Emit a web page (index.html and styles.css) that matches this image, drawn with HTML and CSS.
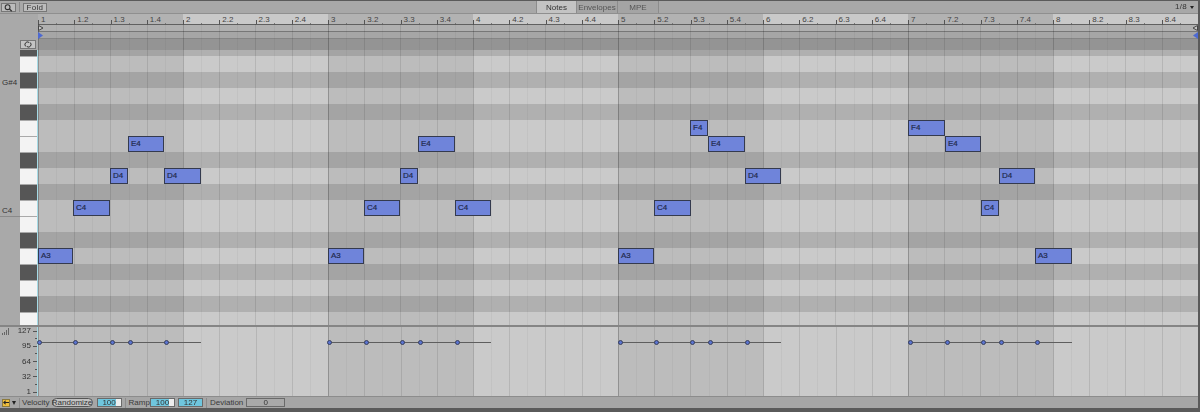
FILE: index.html
```html
<!DOCTYPE html>
<html lang="en">
<head>
<meta charset="utf-8">
<title>MIDI Note Editor</title>
<link rel="stylesheet" href="styles.css">
</head>
<body>
<div class="app">
  <header class="toolbar">
    <button class="tool-btn search" aria-label="Zoom">
      <svg width="9" height="8" viewBox="0 0 9 8"><circle cx="3.6" cy="3.2" r="2.4" fill="none" stroke="#333" stroke-width="1.1"/><path d="M5.4 5l2.4 2.2" stroke="#333" stroke-width="1.3"/></svg>
    </button>
    <span class="tool-div"></span>
    <button class="tool-btn fold">Fold</button>
    <nav class="tabs">
      <span class="tab active">Notes</span>
      <span class="tab">Envelopes</span>
      <span class="tab">MPE</span>
    </nav>
    <span class="grid-size">1/8 <i class="caret"></i></span>
  </header>

  <div class="ruler-row">
    <div class="gutter"></div>
    <div class="ruler">
      <div class="rbar odd"><span>1</span><span>1.2</span><span>1.3</span><span>1.4</span></div>
      <div class="rbar"><span>2</span><span>2.2</span><span>2.3</span><span>2.4</span></div>
      <div class="rbar odd"><span>3</span><span>3.2</span><span>3.3</span><span>3.4</span></div>
      <div class="rbar"><span>4</span><span>4.2</span><span>4.3</span><span>4.4</span></div>
      <div class="rbar odd"><span>5</span><span>5.2</span><span>5.3</span><span>5.4</span></div>
      <div class="rbar"><span>6</span><span>6.2</span><span>6.3</span><span>6.4</span></div>
      <div class="rbar odd"><span>7</span><span>7.2</span><span>7.3</span><span>7.4</span></div>
      <div class="rbar"><span>8</span><span>8.2</span><span>8.3</span><span>8.4</span></div>
    </div>
  </div>

  <div class="head-row">
    <div class="gutter head-gutter">
      <button class="loop-btn" aria-label="Loop">
        <svg width="8" height="7" viewBox="0 0 8 7"><path d="M2 5.6A2.6 2.6 0 0 1 1.4 2 2.6 2.6 0 0 1 5 1.4M6 1.4A2.6 2.6 0 0 1 6.6 5 2.6 2.6 0 0 1 3 5.6" fill="none" stroke="#333" stroke-width="1"/></svg>
      </button>
    </div>
    <div class="head-track">
      <div class="strip strip-a"></div>
      <div class="strip strip-b"></div>
      <div class="strip strip-c"></div>
      <div class="bars">
        <div class="bar odd plain"></div><div class="bar plain"></div><div class="bar odd plain"></div><div class="bar plain"></div>
        <div class="bar odd plain"></div><div class="bar plain"></div><div class="bar odd plain"></div><div class="bar plain"></div>
      </div>
      <svg class="marker m-start-top" width="6" height="6" viewBox="0 0 6 6"><path d="M.5.5L5 3 .5 5.5z" fill="#c9c9c9" stroke="#444"/></svg>
      <svg class="marker m-start-low" width="5" height="7" viewBox="0 0 5 7"><path d="M0 0L5 3.5 0 7z" fill="#4d69d2"/></svg>
      <svg class="marker m-end-top" width="6" height="6" viewBox="0 0 6 6"><path d="M5.5.5L1 3l4.5 2.5z" fill="#c9c9c9" stroke="#444"/></svg>
      <svg class="marker m-end-low" width="5" height="7" viewBox="0 0 5 7"><path d="M5 0L0 3.5 5 7z" fill="#4d69d2"/></svg>
    </div>
  </div>

  <div class="roll">
    <div class="keyboard">
      <div class="krow first"><b class="label"></b><b class="key black"></b></div>
      <div class="krow"><b class="label"></b><b class="key white"></b></div>
      <div class="krow"><b class="label">G#4</b><b class="key black"></b></div>
      <div class="krow"><b class="label"></b><b class="key white"></b></div>
      <div class="krow"><b class="label"></b><b class="key black"></b></div>
      <div class="krow"><b class="label"></b><b class="key white"></b></div>
      <div class="krow"><b class="label"></b><b class="key white"></b></div>
      <div class="krow"><b class="label"></b><b class="key black"></b></div>
      <div class="krow"><b class="label"></b><b class="key white"></b></div>
      <div class="krow"><b class="label"></b><b class="key black"></b></div>
      <div class="krow"><b class="label c4">C4</b><b class="key white"></b></div>
      <div class="krow"><b class="label"></b><b class="key white"></b></div>
      <div class="krow"><b class="label"></b><b class="key black"></b></div>
      <div class="krow"><b class="label"></b><b class="key white"></b></div>
      <div class="krow"><b class="label"></b><b class="key black"></b></div>
      <div class="krow"><b class="label"></b><b class="key white"></b></div>
      <div class="krow"><b class="label"></b><b class="key black"></b></div>
      <div class="krow last"><b class="label"></b><b class="key white"></b></div>
    </div>
    <div class="lanes">
      <div class="lane dark first"></div>
      <div class="lane"></div>
      <div class="lane dark"></div>
      <div class="lane"></div>
      <div class="lane dark"></div>
      <div class="lane"></div>
      <div class="lane"></div>
      <div class="lane dark"></div>
      <div class="lane"></div>
      <div class="lane dark"></div>
      <div class="lane"></div>
      <div class="lane"></div>
      <div class="lane dark"></div>
      <div class="lane"></div>
      <div class="lane dark"></div>
      <div class="lane"></div>
      <div class="lane dark"></div>
      <div class="lane last"></div>
      <div class="bars">
        <div class="bar odd"></div><div class="bar"></div><div class="bar odd"></div><div class="bar"></div>
        <div class="bar odd"></div><div class="bar"></div><div class="bar odd"></div><div class="bar"></div>
      </div>

      <div class="note a3" style="left:0;width:35px">A3</div>
      <div class="note c4" style="left:35px;width:37px">C4</div>
      <div class="note d4" style="left:72px;width:18px">D4</div>
      <div class="note e4" style="left:90px;width:36px">E4</div>
      <div class="note d4" style="left:126px;width:37px">D4</div>

      <div class="note a3" style="left:290px;width:36px">A3</div>
      <div class="note c4" style="left:326px;width:36px">C4</div>
      <div class="note d4" style="left:362px;width:18px">D4</div>
      <div class="note e4" style="left:380px;width:37px">E4</div>
      <div class="note c4" style="left:417px;width:36px">C4</div>

      <div class="note a3" style="left:580px;width:36px">A3</div>
      <div class="note c4" style="left:616px;width:37px">C4</div>
      <div class="note f4" style="left:652px;width:18px">F4</div>
      <div class="note e4" style="left:670px;width:37px">E4</div>
      <div class="note d4" style="left:707px;width:36px">D4</div>

      <div class="note f4" style="left:870px;width:37px">F4</div>
      <div class="note e4" style="left:907px;width:36px">E4</div>
      <div class="note c4" style="left:943px;width:18px">C4</div>
      <div class="note d4" style="left:961px;width:36px">D4</div>
      <div class="note a3" style="left:997px;width:37px">A3</div>
    </div>
  </div>

  <div class="velocity">
    <div class="vel-axis">
      <svg class="vel-icon" width="7" height="7" viewBox="0 0 7 7"><path d="M0 5h1v2H0zM2 4h1v3H2zM4 2h1v5H4zM6 0h1v7H6z" fill="#666"/></svg>
      <div class="vel-scale">
        <span class="tick major">127</span>
        <span class="tick"></span>
        <span class="tick major">95</span>
        <span class="tick"></span>
        <span class="tick major">64</span>
        <span class="tick"></span>
        <span class="tick major">32</span>
        <span class="tick"></span>
        <span class="tick major">1</span>
      </div>
    </div>
    <div class="vel-track">
      <div class="bars">
        <div class="bar odd"></div><div class="bar"></div><div class="bar odd"></div><div class="bar"></div>
        <div class="bar odd"></div><div class="bar"></div><div class="bar odd"></div><div class="bar"></div>
      </div>
      <div class="vel-line" style="left:0;width:163px">
        <i class="dot" style="left:1px"></i><i class="dot" style="left:37px"></i><i class="dot" style="left:74px"></i><i class="dot" style="left:92px"></i><i class="dot" style="left:128px"></i>
      </div>
      <div class="vel-line" style="left:290px;width:163px">
        <i class="dot" style="left:1px"></i><i class="dot" style="left:38px"></i><i class="dot" style="left:74px"></i><i class="dot" style="left:92px"></i><i class="dot" style="left:129px"></i>
      </div>
      <div class="vel-line" style="left:580px;width:163px">
        <i class="dot" style="left:2px"></i><i class="dot" style="left:38px"></i><i class="dot" style="left:74px"></i><i class="dot" style="left:92px"></i><i class="dot" style="left:129px"></i>
      </div>
      <div class="vel-line" style="left:870px;width:164px">
        <i class="dot" style="left:2px"></i><i class="dot" style="left:39px"></i><i class="dot" style="left:75px"></i><i class="dot" style="left:93px"></i><i class="dot" style="left:129px"></i>
      </div>
    </div>
  </div>

  <footer class="footer">
    <span class="fold-btn"><svg width="7" height="5" viewBox="0 0 7 5"><path d="M0 2.5L3 0v2h4v1H3v2z" fill="#222"/></svg></span>
    <i class="down-caret"></i>
    <span class="f-div first-div"></span>
    <span class="f-label velocity-label">Velocity</span>
    <span class="pill">Randomize</span>
    <span class="field slider"><i class="fill"></i><em>100</em></span>
    <span class="f-div"></span>
    <span class="f-label tight">Ramp</span>
    <span class="field slider"><i class="fill"></i><em>100</em></span>
    <span class="field slider"><i class="fill full"></i><em>127</em></span>
    <span class="f-div"></span>
    <span class="f-label">Deviation</span>
    <span class="field plain-field"><em>0</em></span>
  </footer>
</div>
</body>
</html>
```

FILE: styles.css
```css
* { box-sizing: border-box; }
html, body { margin: 0; padding: 0; background: #5a5a5a; overflow: hidden; }
body { width: 1200px; height: 412px; font-family: "Liberation Sans", Arial, sans-serif; font-size: 8px; color: #333; }
button { font: inherit; color: inherit; padding: 0; }
b, i, em { font-weight: normal; font-style: normal; }

.app {
  width: 1200px; height: 412px;
  display: flex; flex-direction: column;
  padding: 1px 2px 4px 0;
  filter: blur(.5px);
}

/* toolbar */
.toolbar { height: 12px; flex: none; background: #a8a8a8; display: flex; align-items: flex-start; position: relative; padding-left: 1px; }
.tool-btn { height: 9px; margin-top: 2px; background: #bcbcbc; border: 1px solid #777; display: flex; align-items: center; justify-content: center; font-size: 8px; letter-spacing: .3px; }
.search { width: 15px; }
.tool-div { width: 1px; height: 10px; margin: 1px 3px 0 3px; background: #8a8a8a; }
.fold { width: 24px; }
.tabs { display: flex; height: 12px; margin-left: 489px; }
.tab { width: 41px; height: 12px; display: flex; align-items: center; justify-content: center; background: #a4a4a4; border-right: 1px solid #8c8c8c; color: #555; }
.tab.active { background: #c3c3c3; color: #333; border-left: 1px solid #8c8c8c; }
.grid-size { margin-left: auto; margin-right: 4px; margin-top: 1px; height: 10px; line-height: 10px; font-size: 8px; letter-spacing: .3px; display: flex; align-items: center; gap: 3px; }
.caret { width: 0; height: 0; border: 2.5px solid transparent; border-top: 3px solid #222; border-bottom: 0; }

/* ruler */
.ruler-row { display: flex; height: 11px; flex: none; border-top: 1px solid #8f8f8f; }
.gutter { width: 38px; flex: none; background: #a9a9a9; }
.ruler { display: flex; flex: 1; }
.rbar { width: 145px; flex: none; display: flex; background: #c9c9c9; }
.rbar.odd { background: #b2b2b2; }
.rbar span {
  width: 36.25px; flex: none; padding-left: 3px; font-size: 8px; line-height: 12px; color: #444;
  background:
    linear-gradient(#555, #555) 0 100% / 1px 4px no-repeat,
    linear-gradient(#777, #777) 18px 100% / 1px 1px no-repeat;
}

/* head strips */
.head-row { display: flex; height: 26px; flex: none; }
.head-gutter { display: flex; align-items: flex-end; justify-content: flex-end; padding: 0 2px 1px 0; }
.loop-btn { width: 16px; height: 9px; background: #c4c4c4; border: 1px solid #777; display: flex; align-items: center; justify-content: center; }
.head-track { flex: 1; position: relative; display: flex; flex-direction: column; }
.strip-a { height: 7px; background: #b0b0b0; border-top: 1px solid #606060; }
.strip-b { height: 8px; background: #a6a6a6; border-top: 1px solid #777; border-bottom: 1px solid #858585; }
.strip-c { flex: 1; background: #949494; }
.marker { position: absolute; }
.m-start-top { left: 0; top: 1px; }
.m-start-low { left: 0; top: 8px; }
.m-end-top { right: 0; top: 1px; }
.m-end-low { right: 0; top: 8px; }

/* bars overlay */
.bars { position: absolute; inset: 0; display: flex; pointer-events: none; }
.bar {
  --edge: rgba(0,0,0,.08);
  width: 145px; flex: none;
  background-image:
    linear-gradient(var(--edge), var(--edge)),
    repeating-linear-gradient(90deg, rgba(0,0,0,.1) 0 1px, transparent 1px 36.25px),
    repeating-linear-gradient(90deg, transparent 0 18.125px, rgba(0,0,0,.04) 18.125px 19.125px, transparent 19.125px 36.25px);
  background-size: 1px 100%, auto, auto;
  background-repeat: no-repeat;
}
.bar.odd { --edge: rgba(0,0,0,.14); background-color: rgba(0,0,0,.065); }
.bar.plain { background-color: transparent; }

/* piano roll */
.roll { display: flex; height: 275px; flex: none; }
.keyboard { width: 38px; flex: none; background: #a9a9a9; border-right: 1px solid #a5dbe6; display: flex; flex-direction: column; }
.krow { height: 16px; display: flex; flex: none; align-items: flex-end; }
.krow.first { height: 6px; }
.krow.last { height: 13px; }
.label { width: 20px; flex: none; font-size: 8px; color: #333; line-height: 10px; padding-left: 2px; }
.label.c4 { box-shadow: 0 1px 0 #8a8a8a; }
.key { width: 17px; height: 15px; flex: none; }
.krow.first .key { height: 6px; }
.krow.last .key { height: 12px; }
.key.white { background: #f3f3f3; }
.key.black { background: #565656; }

.lanes { flex: 1; position: relative; display: flex; flex-direction: column; overflow: hidden; }
.lane { height: 16px; flex: none; background: #cacaca; }
.lane.dark { background: #b0b0b0; }
.lane.first { height: 6px; }
.lane.last { height: 13px; }

.note {
  position: absolute; height: 16px;
  background: #6f84da;
  border: 1.5px solid #343a4e;
  font-size: 8px; line-height: 13px; padding-left: 2px;
  color: #222a4c;
  -webkit-text-stroke: .2px #222a4c;
}
.note.f4 { top: 70px; }
.note.e4 { top: 86px; }
.note.d4 { top: 118px; }
.note.c4 { top: 150px; }
.note.a3 { top: 198px; }

/* velocity */
.velocity { display: flex; height: 71px; flex: none; border-top: 2px solid #858585; }
.vel-axis { width: 38px; flex: none; background: #b2b2b2; border-right: 1px solid #a5dbe6; display: flex; position: relative; }
.vel-icon { position: absolute; left: 2px; top: 1px; }
.vel-scale { flex: 1; display: flex; flex-direction: column; justify-content: space-between; }
.tick { height: 8px; line-height: 8px; text-align: right; padding-right: 6px; font-size: 8px; color: #333; background: linear-gradient(#555, #555) 100% 50% / 2px 1px no-repeat; }
.tick.major { background-size: 4px 1px; }
.vel-track { flex: 1; position: relative; background: #cacaca; }
.vel-line { position: absolute; top: 15px; height: 1px; background: #5e5e5e; }
.dot { position: absolute; top: -2px; width: 5px; height: 5px; margin-left: -2px; border-radius: 50%; background: #5b74d0; border: 1px solid #39405e; }

/* footer */
.footer { height: 12px; flex: none; background: #a6a6a6; border-top: 1px solid #8c8c8c; display: flex; align-items: center; padding-left: 2px; font-size: 8px; }
.fold-btn { width: 8px; height: 8px; background: #efbd3c; border: 1px solid #8c7a3c; display: flex; align-items: center; justify-content: center; }
.down-caret { width: 0; height: 0; margin: 0 3px 0 2px; border: 2.5px solid transparent; border-top: 4px solid #222; border-bottom: 0; }
.f-div { width: 1px; height: 10px; background: #8c8c8c; margin-right: 3px; }
.first-div { margin-right: 2px; }
.f-label { color: #3a3a3a; margin-right: 3px; }
.velocity-label { margin-right: 2px; }
.f-label.tight { margin-right: 0; }
.pill { width: 41px; height: 9px; border: 1px solid #555; border-radius: 5px; background: #c2c2c2; display: flex; align-items: center; justify-content: center; margin-right: 4px; }
.field { height: 9px; border: 1px solid #6a6a6a; background: #ededed; position: relative; display: flex; align-items: center; justify-content: center; }
.field em { position: relative; color: #333; }
.fill { position: absolute; left: 0; top: 0; bottom: 0; width: 80%; background: #6fc6de; }
.fill.full { width: 100%; }
.slider { width: 25px; margin-right: 3px; }
.plain-field { width: 39px; background: #a9a9a9; }
```
